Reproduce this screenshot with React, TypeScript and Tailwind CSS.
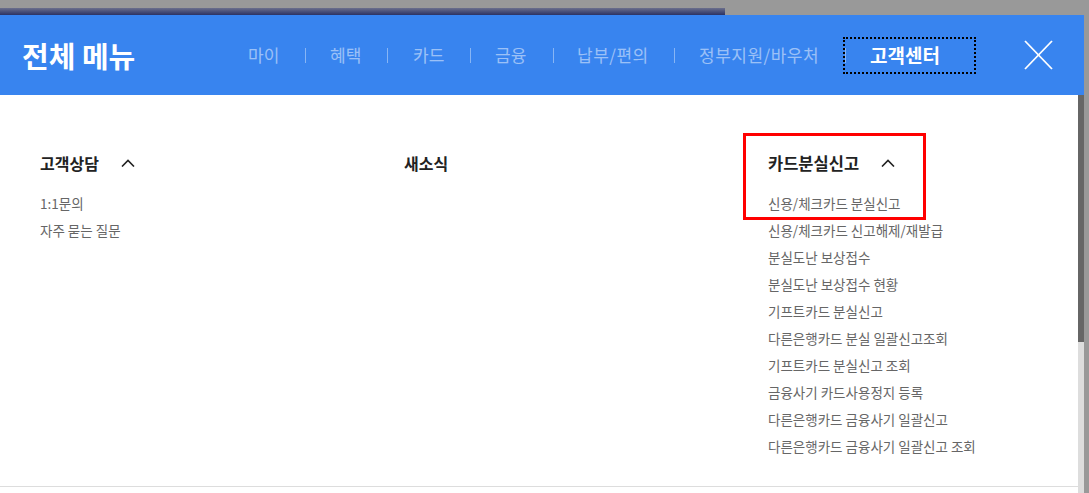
import React from "react";

const font = { fontFamily: '"Noto Sans CJK KR", "Noto Sans", sans-serif' };

function Chevron() {
  return (
    <svg width="14" height="8" viewBox="0 0 14 8" className="ml-[22px]">
      <polyline points="1,7.5 7,1.5 13,7.5" fill="none" stroke="#222" strokeWidth="1.6" />
    </svg>
  );
}

function Sep() {
  return <span className="block w-px h-[15px] bg-white/40" />;
}

const col3 = [
  "신용/체크카드 분실신고",
  "신용/체크카드 신고해제/재발급",
  "분실도난 보상접수",
  "분실도난 보상접수 현황",
  "기프트카드 분실신고",
  "다른은행카드 분실 일괄신고조회",
  "기프트카드 분실신고 조회",
  "금융사기 카드사용정지 등록",
  "다른은행카드 금융사기 일괄신고",
  "다른은행카드 금융사기 일괄신고 조회",
];

export default function App() {
  return (
    <div className="w-[1089px] h-[493px] bg-[#999] flex flex-col overflow-hidden" style={font}>
      <div className="h-[15px] flex items-end shrink-0">
        <div className="w-[725px] h-[7px] bg-gradient-to-b from-[#6b6f8c] to-[#2c3263]" />
      </div>
      <div className="flex flex-1 min-h-0">
        <div className="w-[1084px] flex flex-col">
          <header className="h-[80px] bg-[#3884ef] flex items-center pl-[22px] shrink-0">
            <h1 className="w-[226px] text-[29px] font-bold text-white leading-none">전체 메뉴</h1>
            <nav className="flex items-center text-[17px] text-white/50">
              <span className="w-[57px]">마이</span>
              <Sep />
              <span className="w-[24px]" />
              <span className="w-[57px]">혜택</span>
              <Sep />
              <span className="w-[25px]" />
              <span className="w-[57px]">카드</span>
              <Sep />
              <span className="w-[24px]" />
              <span className="w-[58px]">금융</span>
              <Sep />
              <span className="w-[23px]" />
              <span className="w-[97px] tracking-[0.5px]">납부/편의</span>
              <Sep />
              <span className="w-[24px]" />
              <span className="w-[144px] tracking-[0.5px]">정부지원/바우처</span>
              <div className="w-[133px] h-[37px] border-2 border-dotted border-black flex items-center">
                <Sep />
                <span className="ml-[24px] text-[19px] font-bold text-white">고객센터</span>
              </div>
            </nav>
            <button className="ml-[48px] w-[29px] h-[30px]">
              <svg width="29" height="30" viewBox="0 0 29 30">
                <line x1="1" y1="1" x2="28" y2="29" stroke="white" strokeWidth="1.8" />
                <line x1="28" y1="1" x2="1" y2="29" stroke="white" strokeWidth="1.8" />
              </svg>
            </button>
          </header>
          <div className="flex flex-1 min-h-0">
            <main className="flex-1 bg-white flex flex-col">
              <div className="grid grid-cols-[364px_364px_1fr] pl-[40px] pt-[57px]">
                <section>
                  <div className="flex items-center h-[22px]">
                    <h2 className="text-[16px] font-bold text-[#222]">고객상담</h2>
                    <Chevron />
                  </div>
                  <ul className="mt-[16px] text-[13.5px] text-[#666] leading-[27px]">
                    <li>1:1문의</li>
                    <li>자주 묻는 질문</li>
                  </ul>
                </section>
                <section>
                  <div className="flex items-center h-[22px]">
                    <h2 className="text-[16px] font-bold text-[#222]">새소식</h2>
                  </div>
                </section>
                <section className="relative">
                  <div className="absolute left-[-25px] top-[-19px] w-[183px] h-[87px] border-[3px] border-[#f00]" />
                  <div className="flex items-center h-[22px]">
                    <h2 className="text-[16.5px] font-bold text-[#222]">카드분실신고</h2>
                    <Chevron />
                  </div>
                  <ul className="mt-[16px] text-[13.5px] text-[#666] leading-[27px]">
                    {col3.map((t) => (
                      <li key={t}>{t}</li>
                    ))}
                  </ul>
                </section>
              </div>
              <div className="h-px bg-[#ddd] mt-[26px]" />
            </main>
            <div className="w-[6px] flex flex-col">
              <div className="h-[247px] bg-[#666]" />
              <div className="flex-1 bg-[#ddd]" />
            </div>
          </div>
        </div>
        <div className="flex-1" />
      </div>
    </div>
  );
}
